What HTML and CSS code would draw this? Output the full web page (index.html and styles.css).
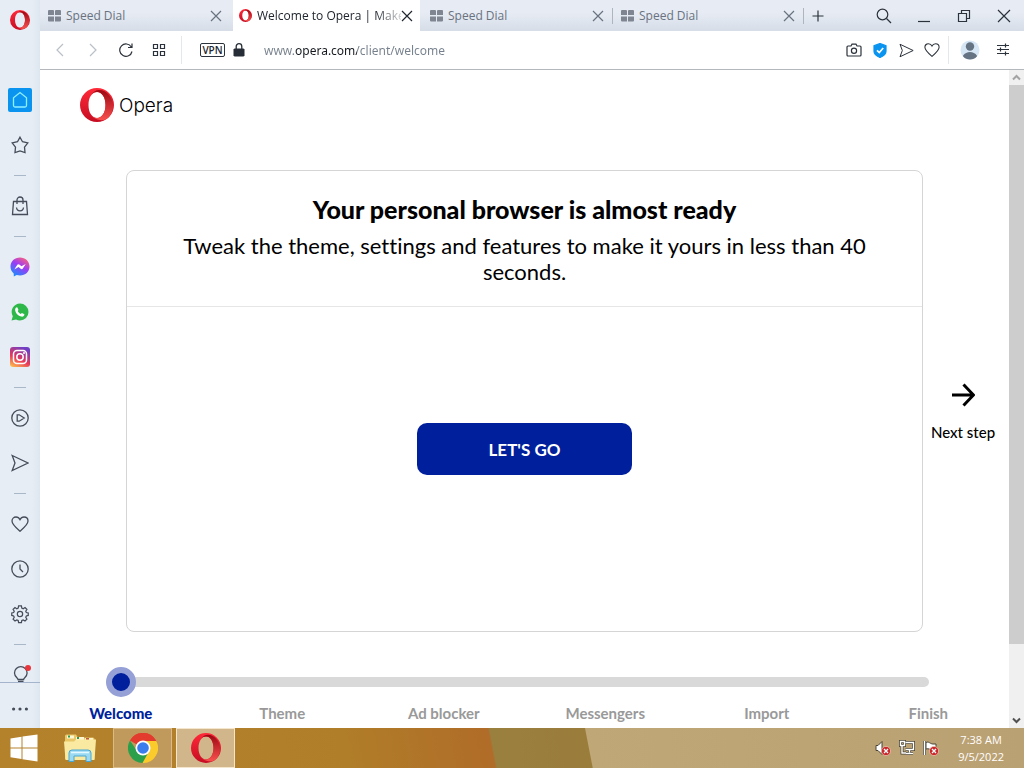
FILE: index.html
```
<!DOCTYPE html>
<html lang="en">
<head>
    <meta charset="utf-8">
    <title>Welcome to Opera | Make</title>
    <link rel="stylesheet" href="styles.css">
</head>
<body>
    <!-- shared icons -->
    <svg class="defs" width="0" height="0" aria-hidden="true">
        <defs>
            <linearGradient id="ringOuter" x1="0" y1="0" x2="0" y2="1">
                <stop offset="0" stop-color="#ff2a3a"/>
                <stop offset="1" stop-color="#c60c22"/>
            </linearGradient>
            <linearGradient id="ringInner" x1="0" y1="0" x2="0" y2="1">
                <stop offset="0" stop-color="#9c0712"/>
                <stop offset="1" stop-color="#f8504e"/>
            </linearGradient>
            <linearGradient id="messenger" x1="0.2" y1="1" x2="0.8" y2="0">
                <stop offset="0" stop-color="#1292ff"/>
                <stop offset="0.55" stop-color="#9b3cf5"/>
                <stop offset="1" stop-color="#ff6178"/>
            </linearGradient>
            <linearGradient id="insta" x1="0.1" y1="1" x2="0.6" y2="0">
                <stop offset="0" stop-color="#fdc04e"/>
                <stop offset="0.45" stop-color="#e8375a"/>
                <stop offset="1" stop-color="#6f3fc4"/>
            </linearGradient>
            <symbol id="opera" viewBox="0 0 34 34">
                <path fill="url(#ringOuter)" fill-rule="evenodd" d="M17 0a17 17 0 1 0 0 34a17 17 0 1 0 0-34zM17 4c5 0 8.500 5.500 8.500 13s-3.500 13-8.500 13s-8.500-5.500-8.500-13s3.500-13 8.500-13z"/>
                <path fill="url(#ringInner)" d="M11.500 6.500C13.500 3.600 16 2 19 2c4 0 7.500 2 9.500 4.500A17 17 0 0 1 28.500 29.500C26 32 23 32.500 20 32c-3.500-.5-6.500-2-8.500-4.500C13 29.200 15 30 17 30c5 0 8.500-5.500 8.500-13S22 4 17 4c-2 0-4 .8-5.500 2.500z"/>
            </symbol>
            <symbol id="dial" viewBox="0 0 13 12">
                <path fill="#7f8691" d="M1 0h4a1 1 0 0 1 1 1v4H0V1a1 1 0 0 1 1-1zM8 0h4a1 1 0 0 1 1 1v4H7V1a1 1 0 0 1 1-1zM0 6.500h6v5H1a1 1 0 0 1-1-1zM7 6.500h6v4a1 1 0 0 1-1 1H7z"/>
            </symbol>
            <symbol id="close" viewBox="0 0 12 12">
                <path d="M1 1l10 10M11 1L1 11" fill="none" stroke="currentColor" stroke-width="1.200"/>
            </symbol>
            <symbol id="heart" viewBox="0 0 18 18">
                <path d="M9 16.200C5 12.800 1 9.500 1 6C1 3.600 2.800 2 5 2c1.800 0 3.200 1 4 2.600C9.800 3 11.200 2 13 2c2.200 0 4 1.600 4 4c0 3.500-4 6.800-8 10.200z"/>
            </symbol>
            <symbol id="send" viewBox="0 0 18 18">
                <path d="M1.200 1.500L17 9L1.200 16.500L4 9z"/>
            </symbol>
            <symbol id="badge" viewBox="0 0 10 10">
                <circle cx="5" cy="5" r="4.600" fill="#c9292c" stroke="#f0c9b4" stroke-width=".7"/>
                <path d="M3 3l4 4M7 3L3 7" stroke="#fff" stroke-width="1.300"/>
            </symbol>
        </defs>
    </svg>

    <div class="browser">
        <aside class="sidebar">
            <button class="menu" aria-label="Opera menu"><svg width="20" height="20"><use href="#opera"/></svg></button>
            <nav class="side-nav">
                <button class="home" aria-label="Speed Dial">
                    <svg width="24" height="24" viewBox="0 0 24 24"><rect width="24" height="24" rx="2" fill="#0a94f0" stroke="none"/><path d="M5.500 17.500V9.800L12 4.500l6.500 5.300v7.700a1.500 1.500 0 0 1-1.500 1.500H7a1.500 1.500 0 0 1-1.500-1.500z" stroke="#8ff0ff"/></svg>
                </button>
                <button aria-label="Bookmarks"><svg width="18" height="18" viewBox="0 0 18 18"><path d="M9 1.200l2.500 4.500l5.300 1.200l-3.300 4.200l.5 5.400L9 15l-5 1.500l.5-5.400L1.200 6.900l5.300-1.200z"/></svg></button>
                <hr>
                <button aria-label="Shopping corner"><svg width="18" height="20" viewBox="0 0 18 20"><path d="M2.500 5.500h13l1 13h-15zM6 8V4a3 3 0 0 1 6 0v4M5.500 11.500c.5 4.500 6.500 4.500 7 0"/></svg></button>
                <hr>
                <button aria-label="Messenger"><svg width="20" height="20" viewBox="0 0 21 21"><path d="M10.500.5C4.800.5.500 4.600.500 10c0 3 1.300 5.500 3.400 7.200L4 20.500l3-1.600c1.100.3 2.300.5 3.500.5c5.700 0 10-4 10-9.400s-4.300-9.500-10-9.500z" fill="url(#messenger)" stroke="none"/><path d="M4.500 13l3-4.700q1-1.300 2.300-.3l2.200 1.700l4.500-2.400l-3 4.700q-1 1.300-2.300.3L9 10.600z" fill="#fff" stroke="none"/></svg></button>
                <button aria-label="WhatsApp"><svg width="18" height="18" viewBox="0 0 18 18"><path d="M9 .5a8.500 8.500 0 0 1 0 17a9 9 0 0 1-4-1L.5 17.500L1.800 13.300A8.500 8.500 0 0 1 9 .5z" fill="#2fb84a" stroke="none"/><path d="M5.200 4.600l1-.3l1.300 2.600l-.8 1.200c.7 1.400 1.700 2.300 3.100 2.900l1.100-1.100l2.500 1.300c0 2-1.700 2.800-3.300 2.300c-3-.9-5-2.900-5.800-5.600c-.4-1.400 0-2.600.9-3.300z" fill="#fff" stroke="none"/></svg></button>
                <button aria-label="Instagram"><svg width="20" height="20" viewBox="0 0 20 20"><rect width="20" height="20" rx="3" fill="url(#insta)" stroke="none"/><rect x="3.500" y="3.500" width="13" height="13" rx="3.500" stroke="#fff" stroke-width="1.500"/><circle cx="10" cy="10" r="3.200" stroke="#fff" stroke-width="1.500"/><circle cx="14" cy="6" r="1" fill="#fff" stroke="none"/></svg></button>
                <hr>
                <button aria-label="Player"><svg width="18" height="18" viewBox="0 0 18 18"><circle cx="9" cy="9" r="8.200"/><path d="M6.200 5.800h2l5 3.200l-5 3.200h-2z"/></svg></button>
                <button aria-label="My Flow"><svg width="18" height="18"><use href="#send"/></svg></button>
                <hr>
                <button aria-label="Pinboards"><svg width="18" height="18"><use href="#heart"/></svg></button>
                <button aria-label="History"><svg width="18" height="18" viewBox="0 0 18 18"><circle cx="9" cy="9" r="8.200"/><path d="M9 4.500V9l3 3"/></svg></button>
                <button aria-label="Settings"><svg width="18" height="18" viewBox="0 0 18 19"><path d="M7.500 1h3l.4 2.200l1.500.7l1.900-1.200l2 2l-1.200 1.900l.6 1.300l2 .5v2.600l-2 .6l-.6 1.400l1.200 1.900l-2 2l-1.900-1.200l-1.500.7l-.4 2.100h-3l-.4-2.100l-1.500-.7l-1.900 1.200l-2-2l1.200-1.900l-.6-1.400l-2-.6V8.400l2-.5l.6-1.300l-1.200-1.900l2-2l1.900 1.200l1.500-.7z"/><circle cx="9" cy="9.500" r="2.800"/></svg></button>
                <hr>
                <button aria-label="Tips"><svg width="20" height="20" viewBox="0 0 20 20"><path d="M8 14.500c0-1.500-3.500-2.500-3.500-6.500a6.300 6.300 0 0 1 12.600 0c0 4-3.500 5-3.500 6.500zM8 16.500h5.500"/><circle cx="18" cy="3" r="3" fill="#e8363c" stroke="none"/></svg></button>
            </nav>
            <button class="more" aria-label="Sidebar setup"><svg width="16" height="4" viewBox="0 0 16 4"><path d="M0 2a1.600 1.600 0 1 1 3.200 0a1.600 1.600 0 1 1-3.200 0M6.400 2a1.600 1.600 0 1 1 3.200 0a1.600 1.600 0 1 1-3.200 0M12.800 2a1.600 1.600 0 1 1 3.200 0a1.600 1.600 0 1 1-3.200 0" fill="#454d5a"/></svg></button>
        </aside>

        <div class="window">
            <div class="tab-bar">
                <div class="tab">
                    <svg width="13" height="12"><use href="#dial"/></svg>
                    <span>Speed Dial</span>
                    <button aria-label="Close tab"><svg width="12" height="12"><use href="#close"/></svg></button>
                </div>
                <div class="tab active">
                    <svg width="13" height="13"><use href="#opera"/></svg>
                    <span>Welcome to Opera | Make</span>
                    <button aria-label="Close tab"><svg width="12" height="12"><use href="#close"/></svg></button>
                </div>
                <div class="tab line">
                    <svg width="13" height="12"><use href="#dial"/></svg>
                    <span>Speed Dial</span>
                    <button aria-label="Close tab"><svg width="12" height="12"><use href="#close"/></svg></button>
                </div>
                <div class="tab line">
                    <svg width="13" height="12"><use href="#dial"/></svg>
                    <span>Speed Dial</span>
                    <button aria-label="Close tab"><svg width="12" height="12"><use href="#close"/></svg></button>
                </div>
                <button class="new-tab" aria-label="New tab"><svg width="12" height="12" viewBox="0 0 12 12"><path d="M6 .5v11M.5 6h11"/></svg></button>
                <div class="window-buttons">
                    <button aria-label="Search tabs"><svg width="16" height="16" viewBox="0 0 16 16"><circle cx="6.500" cy="6.500" r="5.300"/><path d="M10.500 10.500L15 15"/></svg></button>
                    <button aria-label="Minimize"><svg width="14" height="14" viewBox="0 0 14 14"><path d="M1 12.500h12"/></svg></button>
                    <button aria-label="Restore"><svg width="14" height="14" viewBox="0 0 14 14"><path d="M1.500 4.500h8v8h-8zM4.500 4.500v-3h8v8h-3"/></svg></button>
                    <button aria-label="Close"><svg width="14" height="14" viewBox="0 0 14 14"><path d="M1 1l12 12M13 1L1 13"/></svg></button>
                </div>
            </div>

            <div class="toolbar">
                <button class="off" aria-label="Back"><svg width="14" height="14" viewBox="0 0 14 14"><path d="M10 1L4 7l6 6"/></svg></button>
                <button class="off" aria-label="Forward"><svg width="14" height="14" viewBox="0 0 14 14"><path d="M4 1l6 6l-6 6"/></svg></button>
                <button aria-label="Reload"><svg width="14" height="14" viewBox="0 0 14 14"><path d="M13 8.500A6.200 6.200 0 1 1 12.300 4M13 .5v4H9"/></svg></button>
                <button aria-label="Speed Dial"><svg width="14" height="12" viewBox="0 0 14 12"><path d="M1.500.5h4v4h-4zM8.500.5h4v4h-4zM1.500 7.500h4v4h-4zM8.500 7.500h4v4h-4z"/></svg></button>
                <i class="divider"></i>
                <button class="vpn">VPN</button>
                <svg class="lock" width="12" height="14" viewBox="0 0 12 14"><path d="M1.500 5.500h9l1 1v6l-1 1h-9l-1-1v-6z" fill="#262d36"/><path d="M3.200 6V3.500a2.800 2.800 0 0 1 5.600 0V6" fill="none" stroke="#262d36" stroke-width="1.300"/></svg>
                <input class="address" type="text" aria-label="Address" value="www.opera.com/client/welcome">
                <div class="actions">
                    <button aria-label="Snapshot"><svg width="16" height="14" viewBox="0 0 16 14"><path d="M2 3h3l1-1.800h4L11 3h3a1 1 0 0 1 1 1v8a1 1 0 0 1-1 1H2a1 1 0 0 1-1-1V4a1 1 0 0 1 1-1z"/><circle cx="8" cy="7.800" r="2.600"/></svg></button>
                    <button aria-label="Tracker blocker"><svg width="14" height="15" viewBox="0 0 14 15"><path d="M7 .5l6 2.200v5.500c0 3-3 5-6 6.300c-3-1.300-6-3.300-6-6.300V2.700z" fill="#0a94f0" stroke="#0a94f0"/><path d="M4 7.300l2.300 2.200L10.200 5" stroke="#fff" stroke-width="1.700"/></svg></button>
                    <button aria-label="Send to My Flow"><svg width="15" height="15"><use href="#send"/></svg></button>
                    <button aria-label="Add to bookmarks"><svg width="16" height="16"><use href="#heart"/></svg></button>
                </div>
                <i class="divider"></i>
                <button class="profile" aria-label="Profile"><svg width="20" height="20" viewBox="0 0 20 20"><circle cx="10" cy="10" r="9.500" fill="#d6e6f5" stroke="none"/><circle cx="10" cy="6.500" r="4.200" fill="#667382" stroke="none"/><path d="M2.800 16c2-3 4.500-4 7.200-4s5.200 1 7.200 4c-2 2.600-4.500 3.500-7.200 3.500S4.800 18.600 2.800 16z" fill="#667382" stroke="none"/></svg></button>
                <button aria-label="Easy setup"><svg width="14" height="14" viewBox="0 0 14 14"><path d="M1 2.500h12M1 6.500h12M1 10.500h12M9.500.5v4M4.500 4.500v4M9.500 8.500v4"/></svg></button>
            </div>

            <div class="view">
                <main class="page">
                    <header class="brand">
                        <svg width="34" height="34"><use href="#opera"/></svg>
                        <span>Opera</span>
                    </header>
                    <div class="stage">
                        <section class="card">
                            <div class="card-head">
                                <h1>Your personal browser is almost ready</h1>
                                <p>Tweak the theme, settings and features to make it yours in less than 40 seconds.</p>
                            </div>
                            <div class="card-body">
                                <button class="go">LET'S GO</button>
                            </div>
                        </section>
                        <button class="next">
                            <svg width="24" height="24" viewBox="0 0 24 24"><path d="M1 12h21M12.500 1.500L22.500 12L12.500 22.500" fill="none" stroke="#000" stroke-width="3"/></svg>
                            Next step
                        </button>
                    </div>
                    <input class="progress" type="range" min="0" max="5" value="0" aria-label="Setup step">
                    <ol class="steps">
                        <li class="current">Welcome</li>
                        <li>Theme</li>
                        <li>Ad blocker</li>
                        <li>Messengers</li>
                        <li>Import</li>
                        <li>Finish</li>
                    </ol>
                </main>
                <div class="scrollbar">
                    <svg width="15" height="15" viewBox="0 0 15 15"><path d="M4 9.500L7.500 6L11 9.500" fill="none" stroke="#a3a3a3" stroke-width="2"/></svg>
                    <div class="scroll-thumb"></div>
                    <svg width="15" height="15" viewBox="0 0 15 15"><path d="M4 5.500L7.500 9L11 5.500" fill="none" stroke="#505050" stroke-width="2"/></svg>
                </div>
            </div>
        </div>
    </div>

    <footer class="taskbar">
        <button class="start" aria-label="Start"><svg width="28" height="28" viewBox="0 0 28 28"><path fill="#fff" d="M.5 4.500L11.500 2.700V13.500H.5zM12.500 2.500L27.500.500V13.500H12.500zM.5 14.500H11.500V25L.5 23.200zM12.500 14.500H27.500V27.500L12.500 25.200z"/></svg></button>
        <button class="files" aria-label="File Explorer">
            <svg width="32" height="30" viewBox="0 0 32 30">
                <path d="M1 3q0-1.500 1.500-1.500H12l2 3h15q1.500 0 1.500 1.500v20H1z" fill="#e9c766"/>
                <path d="M3 2.500h7v3H3zM12 4h8v4h-8zM21 5h8v4h-8z" fill="#fff6d0"/>
                <path d="M4 2.500h2v2H4zM13 4h2v2h-2z" fill="#2e9b4f"/><path d="M22 5h3v2h-3z" fill="#c2563a"/>
                <path d="M0 8.500h10l2-2h20L30.500 27H1.500z" fill="#fae9a0"/>
                <path d="M5 28.500V20q0-3 3-3h16q3 0 3 3v8.500h-5V23H10v5.500z" fill="#9bd9f2" stroke="#48a6d2"/>
                <path d="M7 19.500h18" stroke="#e4f8ff" stroke-width="1.500"/>
            </svg>
        </button>
        <button class="task" aria-label="Google Chrome">
            <svg width="30" height="30" viewBox="0 0 30 30">
                <path d="M15 15L2 7.500A15 15 0 0 1 28 7.500L28.500 9H15z" fill="#e33b2e"/>
                <path d="M2 7.500A15 15 0 0 0 15 30L21 18.500L15 15L9 18z" fill="#2c9f4b"/>
                <path d="M28 7.500A15 15 0 0 1 14.500 30L21 18.500L18 8h10z" fill="#fbcb2c"/>
                <path d="M2 7.500A15 15 0 0 1 28 7.500z" fill="#e33b2e"/>
                <circle cx="15" cy="15" r="7.500" fill="#fff"/><circle cx="15" cy="15" r="5.800" fill="#3b7ded"/>
            </svg>
        </button>
        <button class="task open" aria-label="Opera"><svg width="30" height="30"><use href="#opera"/></svg></button>
        <div class="tray">
            <svg width="16" height="16" viewBox="0 0 16 16"><path d="M1 5.500h2l4-4v13l-4-4H1z" fill="#fff" stroke="#4a4436"/><use href="#badge" x="6" y="6" width="10" height="10"/></svg>
            <svg width="16" height="16" viewBox="0 0 16 16"><g fill="none"><path d="M6.500 2.500h8v7h-8M10.500 9.500v3M7 13.500h7M3 6v7h4M1.500 1.500h4v4h-4z" stroke="#4a4436" stroke-width="3"/><path d="M6.500 2.500h8v7h-8M10.500 9.500v3M7 13.500h7M3 6v7h4M1.500 1.500h4v4h-4z" stroke="#fff" stroke-width="1.400"/></g></svg>
            <svg width="16" height="16" viewBox="0 0 16 16"><path d="M1.500 1v14" stroke="#4a4436" stroke-width="3"/><path d="M3 2.500c3-1.500 4 1.500 7 1.500h3v6h-3c-3 0-4-2-7-1z" fill="#fff" stroke="#4a4436"/><path d="M1.500 1v14" stroke="#fff" stroke-width="1.500"/><use href="#badge" x="6" y="6" width="10" height="10"/></svg>
            <div class="clock">7:38 AM<br>9/5/2022</div>
        </div>
    </footer>
</body>
</html>
```
FILE: styles.css
```
* {
    box-sizing: border-box;
}

body {
    margin: 0;
    height: 100vh;
    display: flex;
    flex-direction: column;
    overflow: hidden;
    font-family: "Open Sans", "Noto Sans", sans-serif;
    font-size: 12px;
    color: #20262e;
    background: #fff;
}

.defs {
    position: absolute;
}

button {
    display: flex;
    align-items: center;
    justify-content: center;
    flex-shrink: 0;
    margin: 0;
    padding: 0;
    border: none;
    background: none;
    color: inherit;
    font: inherit;
    cursor: pointer;
}

.browser {
    flex: 1;
    min-height: 0;
    display: flex;
}

/* Sidebar */

.sidebar {
    width: 40px;
    display: flex;
    flex-direction: column;
    background: linear-gradient(90deg, #e7edf5 80%, #dde6ef);
    fill: none;
    stroke: #454d5a;
    stroke-width: 1.3px;
}

.menu {
    height: 40px;
    margin-bottom: 37px;
    stroke: none;
}

.side-nav {
    flex: 1;
    min-height: 0;
    overflow: hidden;
}

.side-nav button {
    width: 40px;
    height: 45px;
}

.side-nav svg {
    overflow: visible;
}

.side-nav hr {
    width: 12px;
    height: 1px;
    margin: 8px auto 7px;
    border: none;
    background: #a9b8c8;
}

.more {
    height: 46px;
    padding-top: 6px;
    border-top: 1px solid #a3b4cc;
    stroke: none;
}

/* Tabs */

.window {
    flex: 1;
    min-width: 0;
    display: flex;
    flex-direction: column;
}

.tab-bar {
    height: 31px;
    display: flex;
    background: linear-gradient(#e7ecf4 40%, #d6dde7);
}

.tab {
    flex: 0 1 191px;
    min-width: 0;
    display: flex;
    align-items: center;
    padding: 0 9px 0 8px;
    color: #69727f;
}

.tab svg {
    flex-shrink: 0;
}

.tab span {
    flex: 1;
    padding-left: 5px;
    overflow: hidden;
    white-space: nowrap;
}

.tab.active {
    flex-basis: 187px;
    margin: 0 2px;
    padding: 0 7px 0 6px;
    background: #fff;
    color: #20262e;
}

.tab.active span {
    -webkit-mask-image: linear-gradient(90deg, #000 82%, rgba(0, 0, 0, 0.2));
    mask-image: linear-gradient(90deg, #000 82%, rgba(0, 0, 0, 0.2));
}

.tab.line {
    background: linear-gradient(#aeb5bf, #aeb5bf) right center / 1px 16px no-repeat;
}

.new-tab {
    width: 28px;
}

.new-tab svg,
.window-buttons svg,
.toolbar svg {
    fill: none;
    stroke: #2b323b;
    stroke-width: 1.2px;
}

.window-buttons {
    display: flex;
    margin-left: auto;
}

.window-buttons button {
    width: 40px;
}

/* Toolbar */

.toolbar {
    height: 39px;
    display: flex;
    align-items: center;
    padding: 0 5px 0 3px;
    border-bottom: 1px solid #b4b7bb;
}

.toolbar button {
    width: 33px;
    height: 30px;
}

.toolbar .off svg {
    stroke: #b9c0c8;
}

.divider {
    width: 1px;
    height: 28px;
    margin: 0 4px 0 6px;
    background: #e4e8ed;
}

.toolbar .vpn {
    width: 25px;
    height: 14px;
    margin: 0 8px 0 14px;
    border: 1px solid #2b323b;
    border-radius: 2px;
    font-size: 10px;
    font-weight: 600;
}

.toolbar .lock {
    stroke: none;
}

.address {
    flex: 1;
    min-width: 0;
    height: 30px;
    margin-left: 19px;
    padding: 0;
    border: none;
    outline: none;
    font: 12px "Noto Sans", sans-serif;
    /* host name is darker than the rest of the address */
    color: transparent;
    background: linear-gradient(90deg, #75808c 31px, #15191e 31px, #15191e 93px, #75808c 93px);
    -webkit-background-clip: text;
    background-clip: text;
}

.actions {
    display: flex;
}

.actions button {
    width: 26px;
}

.actions + .divider {
    margin-left: 3px;
}

/* Page */

.view {
    flex: 1;
    min-height: 0;
    display: flex;
}

.page {
    flex: 1;
    min-width: 0;
    display: flex;
    flex-direction: column;
    padding: 18px 0 5px;
    font-family: Lato, "Liberation Sans", sans-serif;
    font-variant-ligatures: none;
    color: #000;
}

.brand {
    display: flex;
    align-items: center;
    gap: 5px;
    margin: 0 40px 48px;
    font-family: Inter, sans-serif;
    font-size: 19px;
    font-weight: 300;
}

.stage {
    flex: 1;
    display: grid;
    grid-template-columns: 1fr 86px;
    padding-left: 86px;
}

.card {
    border: 1px solid #d5d5d5;
    border-radius: 8px;
}

.card-head {
    padding: 23px 40px 21px;
    border-bottom: 1px solid #e6e6e6;
    text-align: center;
}

.card h1 {
    margin: 0 0 9px;
    font-size: 25px;
    font-weight: 900;
    line-height: 30px;
}

.card p {
    margin: 0;
    font-size: 22px;
    line-height: 26px;
}

.card-body {
    display: flex;
    justify-content: center;
    padding-top: 116px;
}

.go {
    width: 215px;
    height: 52px;
    border-radius: 10px;
    background: #001f9c;
    color: #fff;
    font-size: 17px;
    font-weight: 700;
}

.next {
    flex-direction: column;
    gap: 16px;
    padding: 22px 6px 0 0;
    font-size: 15px;
    font-weight: 500;
}

.progress {
    -webkit-appearance: none;
    appearance: none;
    height: 30px;
    margin: 35px 80px 6px 66px;
    background: none;
}

.progress::-webkit-slider-runnable-track {
    height: 10px;
    border-radius: 5px;
    background: #d9d9d9;
}

.progress::-webkit-slider-thumb {
    -webkit-appearance: none;
    width: 30px;
    height: 30px;
    margin-top: -10px;
    border: 6px solid #94a0d6;
    border-radius: 50%;
    background: #001f9c;
}

.steps {
    display: grid;
    grid-template-columns: repeat(6, 1fr);
    margin: 0;
    padding: 0;
    list-style: none;
    font-size: 15px;
    font-weight: 700;
    line-height: 20px;
    text-align: center;
    color: #999;
}

.steps .current {
    font-weight: 900;
    color: #001f9c;
}

.scrollbar {
    width: 15px;
    display: flex;
    flex-direction: column;
    background: #f0f0f0;
}

.scroll-thumb {
    height: 85%;
    margin-bottom: auto;
    background: #cdcdcd;
}

/* Taskbar */

.taskbar {
    height: 40px;
    display: flex;
    align-items: stretch;
    gap: 4px;
    color: #fff;
    background: linear-gradient(79deg, #b5822c, #b07d29 34%, #b06c28 48%, #9a803f 48.2%, #9a7c3b 57.4%, #bfa777 57.5%, #baa173);
}

.start {
    width: 47px;
}

.files {
    width: 58px;
}

.task {
    width: 59px;
    border: 1px solid #d8bb88;
    background: #bf9a5c;
}

.task.open {
    border-color: #f3e6cc;
    background: #d0b68a;
}

.tray {
    display: flex;
    align-items: center;
    gap: 8px;
    margin-left: auto;
    padding-right: 20px;
}

.clock {
    margin-left: 11px;
    font-size: 11px;
    line-height: 17px;
    text-align: center;
}
```
